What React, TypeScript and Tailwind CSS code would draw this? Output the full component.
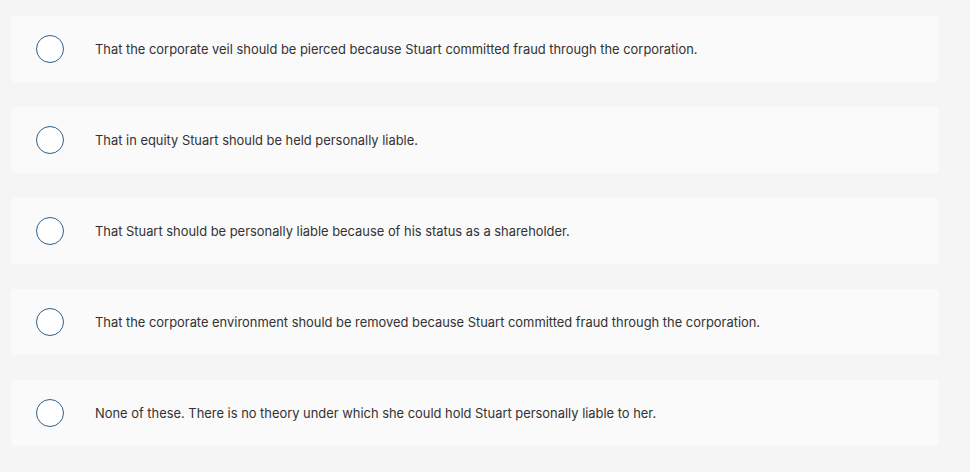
const options = [
  'That the corporate veil should be pierced because Stuart committed fraud through the corporation.',
  'That in equity Stuart should be held personally liable.',
  'That Stuart should be personally liable because of his status as a shareholder.',
  'That the corporate environment should be removed because Stuart committed fraud through the corporation.',
  'None of these. There is no theory under which she could hold Stuart personally liable to her.',
];

export default function App() {
  return (
    <div className="min-h-[472px] w-[970px] bg-[#f5f5f5] pt-4 pl-[11px] pr-[31px] font-['Inter',sans-serif]">
      <div className="flex flex-col gap-[25px]">
        {options.map((text) => (
          <div key={text} className="flex h-[66px] items-center rounded-[4px] bg-[#fafafa] pl-[25px]">
            <div className="h-[28px] w-[28px] shrink-0 rounded-full border-[1.5px] border-[#2f5f8f] bg-white" />
            <div className="ml-[31px] pt-px text-[12.9px] text-[#333333]">{text}</div>
          </div>
        ))}
      </div>
    </div>
  );
}
